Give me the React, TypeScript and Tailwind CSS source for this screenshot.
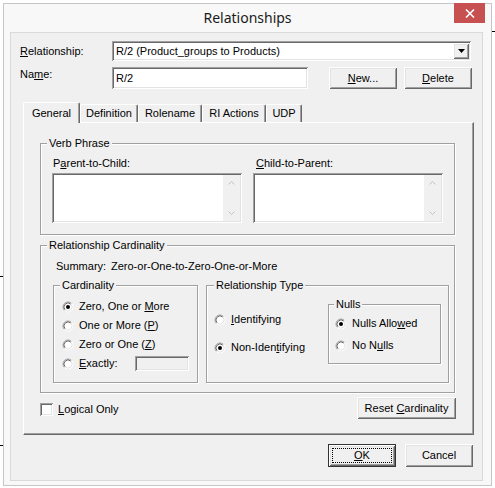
import React from 'react';

const raised =
  'bg-[#f0f0f0] shadow-[inset_1px_1px_0_#fff,inset_-1px_-1px_0_#696969,inset_2px_2px_0_#e3e3e3,inset_-2px_-2px_0_#a0a0a0]';
const sunken =
  'shadow-[inset_1px_1px_0_#a0a0a0,inset_-1px_-1px_0_#fff,inset_2px_2px_0_#696969,inset_-2px_-2px_0_#e3e3e3]';
const etched = 'border border-[#a0a0a0] shadow-[inset_1px_1px_0_#fff,1px_1px_0_#fff]';

const Radio = ({ checked }: { checked?: boolean }) => (
  <svg width="12" height="12" viewBox="0 0 12 12" className="shrink-0">
    <circle cx="6" cy="6" r="4.5" fill="#fff" />
    <path d="M2.46 9.54 A5 5 0 0 1 9.54 2.46" stroke="#a0a0a0" fill="none" />
    <path d="M9.54 2.46 A5 5 0 0 1 2.46 9.54" stroke="#fff" fill="none" />
    <path d="M3.17 8.83 A4 4 0 0 1 8.83 3.17" stroke="#696969" fill="none" />
    <path d="M8.83 3.17 A4 4 0 0 1 3.17 8.83" stroke="#e3e3e3" fill="none" />
    {checked && <circle cx="6" cy="6" r="2" fill="#000" />}
  </svg>
);

const Chevron = ({ up }: { up?: boolean }) => (
  <svg width="7" height="4" viewBox="0 0 7 4">
    <polyline points={up ? '0.5,3.5 3.5,0.5 6.5,3.5' : '0.5,0.5 3.5,3.5 6.5,0.5'} stroke="#c2c2c2" fill="none" />
  </svg>
);

const MemoBox = () => (
  <div className={`h-[50px] w-[190px] bg-white flex justify-end p-[2px] ${sunken}`}>
    <div className="w-[17px] h-full bg-[#f0f0f0] flex flex-col items-center justify-between py-[6px]">
      <Chevron up />
      <Chevron />
    </div>
  </div>
);

const Group = ({
  title,
  className,
  legendClass,
  children,
}: {
  title: string;
  className: string;
  legendClass: string;
  children?: React.ReactNode;
}) => (
  <fieldset className={`${etched} ${className}`}>
    <legend className={`px-[2px] bg-[#f0f0f0] ${legendClass}`}>{title}</legend>
    {children}
  </fieldset>
);

const RadioRow = ({ checked, children, className = '' }: { checked?: boolean; children: React.ReactNode; className?: string }) => (
  <div className={`h-[19px] flex items-center gap-[5px] ${className}`}>
    <Radio checked={checked} />
    <span>{children}</span>
  </div>
);

const tabs = ['General', 'Definition', 'Rolename', 'RI Actions', 'UDP'];
const tabWidths = ['w-[57px]', 'w-[58px]', 'w-[64px]', 'w-[64px]', 'w-[36px]'];

export default function App() {
  return (
    <div className="relative w-[495px] h-[488px] bg-white pt-[3px] pl-[3px] font-['Liberation_Sans',Arial,sans-serif] text-[11px] leading-[13px] text-black overflow-hidden">
      <div className="absolute right-0 top-[31px] w-[3px] h-px bg-black" />
      <div className="absolute left-0 top-[445px] w-[3px] h-px bg-black" />
      <div className="absolute left-0 top-[276px] w-[3px] h-px bg-black" />

      <div className="w-[489px] h-[483px] border border-[#c6c6c6] bg-[#f8f8f8] flex flex-col">
        {/* title bar */}
        <div className="h-[28px] flex items-start">
          <div className="w-[37px]" />
          <div className="flex-1 text-center pt-[4px] font-['Noto_Sans',sans-serif] text-[14px] leading-[20px] text-[#1a1a1a]">
            Relationships
          </div>
          <div className="w-[31px] h-[20px] -mt-px mr-[6px] bg-[#c75050] flex items-center justify-center">
            <svg width="10" height="9" viewBox="0 0 10 9">
              <path d="M1 0.5 L9 8.5 M9 0.5 L1 8.5" stroke="#fff" strokeWidth="1.6" />
            </svg>
          </div>
        </div>

        {/* client area */}
        <div className="ml-[6px] w-[473px] h-[449px] border border-[#d9d9d9] bg-[#f0f0f0] flex flex-col">
          <div className="mt-[8px] flex items-center h-[20px]">
            <div className="w-[101px] pl-[9px]">
              <u>R</u>elationship:
            </div>
            <div className={`w-[359px] h-[20px] bg-white flex items-center p-[2px] ${sunken}`}>
              <span className="flex-1 pl-[2px]">R/2 (Product_groups to Products)</span>
              <div className={`w-[16px] h-[16px] flex items-center justify-center ${raised}`}>
                <svg width="7" height="4" viewBox="0 0 7 4">
                  <polygon points="0,0 7,0 3.5,4" fill="#000" />
                </svg>
              </div>
            </div>
          </div>

          <div className="mt-[6px] flex h-[22px]">
            <div className="w-[101px] pl-[9px] pt-[1px]">
              Na<u>m</u>e:
            </div>
            <div className={`w-[196px] h-[22px] bg-white flex items-center pl-[4px] ${sunken}`}>R/2</div>
            <div className={`ml-[21px] w-[68px] h-[22px] flex items-center justify-center ${raised}`}>
              <span>
                <u>N</u>ew...
              </span>
            </div>
            <div className={`ml-[7px] w-[68px] h-[22px] flex items-center justify-center ${raised}`}>
              <span>
                <u>D</u>elete
              </span>
            </div>
          </div>

          {/* tabs */}
          <div className="mt-[13px] ml-[12px] h-[20px] flex items-end">
            {tabs.map((t, i) => (
              <div
                key={t}
                className={`${tabWidths[i]} flex justify-center border-t border-l border-white border-r border-r-[#696969] rounded-t-[2px] shadow-[inset_-1px_0_0_#a0a0a0] ${
                  i === 0 ? 'h-[21px] -mb-px relative z-10 bg-[#f0f0f0] pt-[4px]' : 'h-[18px] pt-[2px]'
                }`}
              >
                {t}
              </div>
            ))}
          </div>

          {/* tab panel */}
          <div className="ml-[12px] w-[451px] h-[313px] border border-white border-r-[#696969] border-b-[#696969] shadow-[inset_-1px_-1px_0_#a0a0a0] flex flex-col">
            <Group title="Verb Phrase" className="mt-[14px] ml-[16px] w-[415px] h-[98px]" legendClass="ml-[6px]">
              <div className="flex px-[11px] gap-[11px]">
                <div className="flex flex-col">
                  <div className="mt-[7px] ml-[1px]">
                    P<u>a</u>rent-to-Child:
                  </div>
                  <div className="mt-[3px]">
                    <MemoBox />
                  </div>
                </div>
                <div className="flex flex-col">
                  <div className="mt-[7px] ml-[3px]">
                    <u>C</u>hild-to-Parent:
                  </div>
                  <div className="mt-[3px]">
                    <MemoBox />
                  </div>
                </div>
              </div>
            </Group>

            <Group title="Relationship Cardinality" className="mt-[4px] ml-[16px] w-[415px] h-[154px]" legendClass="ml-[6px]">
              <div className="mt-[8px] pl-[15px] flex">
                <span className="w-[55px]">Summary:</span>
                <span>Zero-or-One-to-Zero-One-or-More</span>
              </div>
              <div className="mt-[6px] pl-[12px] flex gap-[8px]">
                <Group title="Cardinality" className="w-[145px] h-[104px]" legendClass="ml-[6px]">
                  <div className="pl-[8px] pt-[5px] flex flex-col">
                    <RadioRow checked>
                      Zero, One or <u>M</u>ore
                    </RadioRow>
                    <RadioRow>
                      One or More (<u>P</u>)
                    </RadioRow>
                    <RadioRow>
                      Zero or One (<u>Z</u>)
                    </RadioRow>
                    <div className="h-[19px] flex items-center">
                      <Radio />
                      <span className="ml-[5px] w-[56px]">
                        <u>E</u>xactly:
                      </span>
                      <div className={`w-[54px] h-[15px] bg-[#f0f0f0] ${sunken}`} />
                    </div>
                  </div>
                </Group>
                <Group title="Relationship Type" className="w-[243px] h-[104px]" legendClass="ml-[7px]">
                  <div className="flex">
                    <div className="w-[121px] pl-[7px] flex flex-col">
                      <RadioRow className="mt-[18px]">
                        <u>I</u>dentifying
                      </RadioRow>
                      <RadioRow checked className="mt-[9px]">
                        Non-Iden<u>t</u>ifying
                      </RadioRow>
                    </div>
                    <Group title="Nulls" className="mt-[6px] w-[113px] h-[66px]" legendClass="ml-[5px]">
                      <div className="pl-[6px] flex flex-col">
                        <RadioRow checked className="mt-[3px]">
                          Nulls Allo<u>w</u>ed
                        </RadioRow>
                        <RadioRow className="mt-[3px]">
                          No N<u>u</u>lls
                        </RadioRow>
                      </div>
                    </Group>
                  </div>
                </Group>
              </div>
            </Group>

            <div className="mt-[4px] ml-[16px] w-[416px] flex items-center justify-between">
              <div className="flex items-center gap-[5px] pt-[2px]">
                <div className={`w-[13px] h-[13px] bg-white ${sunken}`} />
                <span>
                  <u>L</u>ogical Only
                </span>
              </div>
              <div className={`w-[99px] h-[22px] flex items-center justify-center ${raised}`}>
                <span>
                  Reset <u>C</u>ardinality
                </span>
              </div>
            </div>
          </div>

          {/* dialog buttons */}
          <div className="mt-[9px] ml-[12px] w-[451px] pr-[1px] flex justify-end gap-[9px]">
            <div className="w-[68px] h-[23px] border border-[#333] bg-[#f0f0f0]">
              <div className={`w-full h-full p-[3px] ${raised}`}>
                <div className="w-full h-full border border-dotted border-black flex items-center justify-center">
                  <span>
                    <u>O</u>K
                  </span>
                </div>
              </div>
            </div>
            <div className={`w-[68px] h-[23px] flex items-center justify-center ${raised}`}>Cancel</div>
          </div>
        </div>
      </div>
    </div>
  );
}
